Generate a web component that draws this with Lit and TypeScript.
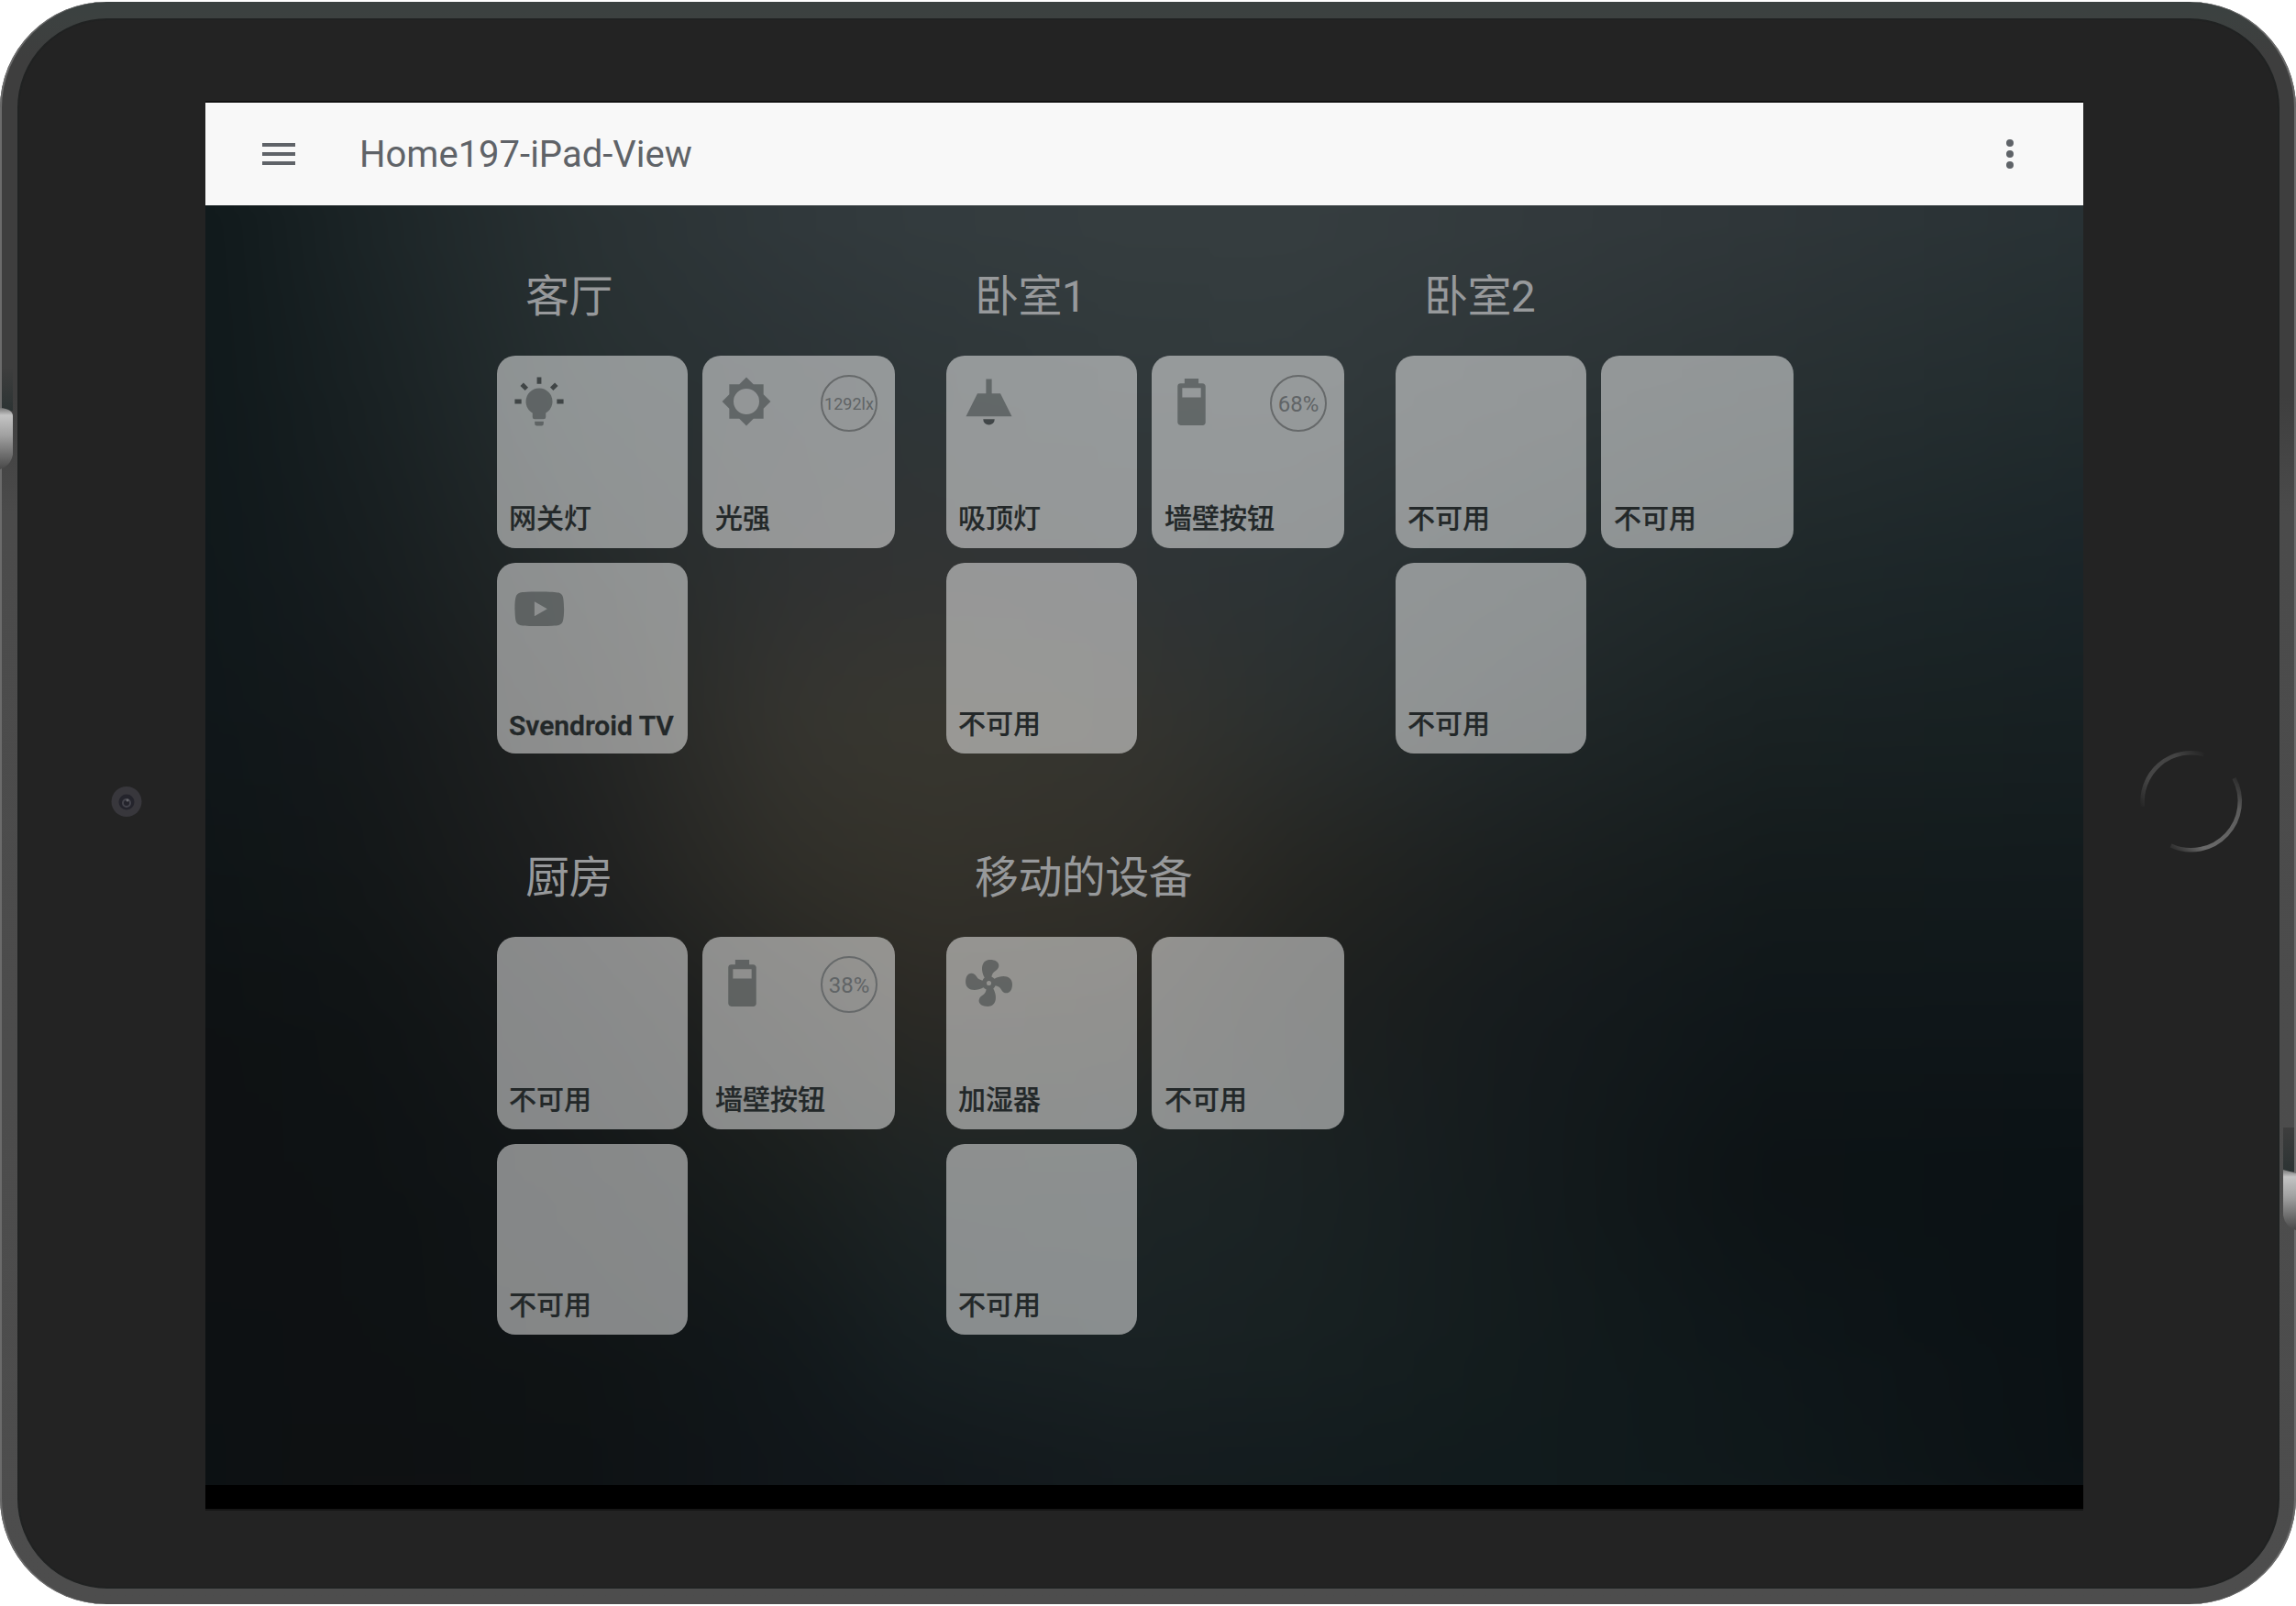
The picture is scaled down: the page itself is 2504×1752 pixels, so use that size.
import { LitElement, html, svg, css, nothing } from "lit";
import { customElement, property } from "lit/decorators.js";

interface Icon { size: number; cx: number; paths: string[]; dark?: string; }

const ICONS: Record<string, Icon> = {
  bulb: {
    size: 58, cx: 46,
    paths: ["M12,6A6,6 0 0,1 18,12C18,14.22 16.79,16.16 15,17.2V19A1,1 0 0,1 14,20H10A1,1 0 0,1 9,19V17.2C7.21,16.16 6,14.22 6,12A6,6 0 0,1 12,6M14,21V22A1,1 0 0,1 13,23H11A1,1 0 0,1 10,22V21H14"],
    dark: "M20,11H23V13H20V11M1,11H4V13H1V11M13,1V4H11V1H13M4.92,3.5L7.05,5.64L5.63,7.05L3.5,4.93L4.92,3.5M16.95,5.63L19.07,3.5L20.5,4.93L18.37,7.05L16.95,5.63Z",
  },
  sun: {
    size: 56, cx: 48,
    paths: ["M12,18A6,6 0 0,1 6,12A6,6 0 0,1 12,6A6,6 0 0,1 18,12A6,6 0 0,1 12,18M20,15.31L23.31,12L20,8.69V4H15.31L12,0.69L8.69,4H4V8.69L0.69,12L4,15.31V20H8.69L12,23.31L15.31,20H20V15.31Z"],
  },
  lamp: {
    size: 75, cx: 46,
    paths: ["M8,9H11V4H13V9H16L20,17H4L8,9Z"],
    dark: "M14,18A2,2 0 0,1 12,20A2,2 0 0,1 10,18H14Z",
  },
  battery: {
    size: 61, cx: 43.4,
    paths: ["M16,10H8V6H16M16.67,4H15V2H9V4H7.33A1.33,1.33 0 0,0 6,5.33V20.67C6,21.4 6.6,22 7.33,22H16.67A1.33,1.33 0 0,0 18,20.67V5.33C18,4.6 17.4,4 16.67,4Z"],
  },
  youtube: {
    size: 64.5, cx: 46,
    paths: ["M10,15L15.19,12L10,9V15M21.56,7.17C21.69,7.64 21.78,8.27 21.84,9.07C21.91,9.87 21.94,10.56 21.94,11.16L22,12C22,14.19 21.84,15.8 21.56,16.83C21.31,17.73 20.73,18.31 19.83,18.56C19.36,18.69 18.5,18.78 17.18,18.84C15.88,18.91 14.69,18.94 13.59,18.94L12,19C7.81,19 5.2,18.84 4.17,18.56C3.27,18.31 2.69,17.73 2.44,16.83C2.31,16.36 2.22,15.73 2.16,14.93C2.09,14.13 2.06,13.44 2.06,12.84L2,12C2,9.81 2.16,8.2 2.44,7.17C2.69,6.27 3.27,5.69 4.17,5.44C4.64,5.31 5.5,5.22 6.82,5.16C8.12,5.09 9.31,5.06 10.41,5.06L12,5C16.19,5 18.8,5.16 19.83,5.44C20.73,5.69 21.31,6.27 21.56,7.17Z"],
  },
  fan: {
    size: 61, cx: 46,
    paths: ["M12,11A1,1 0 0,0 11,12A1,1 0 0,0 12,13A1,1 0 0,0 13,12A1,1 0 0,0 12,11M12.5,2C17,2 17.11,5.57 14.75,6.75C13.76,7.24 13.32,8.29 13.13,9.22C13.61,9.42 14.03,9.73 14.35,10.13C18.05,8.13 22.03,8.92 22.03,12.5C22.03,17 18.46,17.1 17.28,14.73C16.78,13.74 15.72,13.3 14.79,13.11C14.59,13.59 14.28,14 13.88,14.34C15.87,18.03 15.08,22 11.5,22C7,22 6.91,18.42 9.27,17.24C10.25,16.75 10.69,15.71 10.89,14.79C10.4,14.59 9.97,14.27 9.65,13.87C5.96,15.85 2,15.07 2,11.5C2,7 5.56,6.89 6.74,9.26C7.24,10.25 8.29,10.68 9.22,10.87C9.41,10.39 9.73,9.97 10.14,9.65C8.15,5.96 8.94,2 12.5,2Z"],
  },
};

interface Tile { name: string; icon?: string; badge?: string; }
interface Room { title: string; tiles: Tile[]; }

const OFF: Tile = { name: "不可用" };
const ROOMS: Room[] = [
  { title: "客厅", tiles: [{ name: "网关灯", icon: "bulb" }, { name: "光强", icon: "sun", badge: "1292lx" }, { name: "Svendroid TV", icon: "youtube" }] },
  { title: "卧室1", tiles: [{ name: "吸顶灯", icon: "lamp" }, { name: "墙壁按钮", icon: "battery", badge: "68%" }, OFF] },
  { title: "卧室2", tiles: [OFF, OFF, OFF] },
  { title: "厨房", tiles: [OFF, { name: "墙壁按钮", icon: "battery", badge: "38%" }, OFF] },
  { title: "移动的设备", tiles: [{ name: "加湿器", icon: "fan" }, OFF, OFF] },
];

// Wallpaper: horizontal colour ramps, blended downwards from one row to the next.
const WALL_X = [0, 170, 410, 640, 780, 1010, 1180, 1400, 1700, 2048];
const WALL: { y: number; c: string[] }[] = [
  { y: 0, c: ["#10191b", "#1c2527", "#2a3234", "#31393c", "#343c3f", "#363e40", "#363e40", "#343b3e", "#30373a", "#293235"] },
  { y: 200, c: ["#10191b", "#192123", "#273031", "#2c3336", "#2e3638", "#31393b", "#323a3c", "#2e3638", "#293133", "#222c2e"] },
  { y: 410, c: ["#10181b", "#171d1f", "#242929", "#303232", "#333434", "#303436", "#2c3335", "#272e30", "#1f2829", "#1a2428"] },
  { y: 560, c: ["#10171a", "#15191b", "#222423", "#363530", "#393830", "#353530", "#2c302f", "#22292a", "#1a2223", "#172022"] },
  { y: 730, c: ["#0f1517", "#131718", "#1f2020", "#302f29", "#34322b", "#32302a", "#262622", "#1c2020", "#141b1c", "#131b1d"] },
  { y: 870, c: ["#0e1214", "#101415", "#181b1c", "#252522", "#2d2b26", "#2a2925", "#1f211f", "#171c1e", "#10171a", "#10171a"] },
  { y: 1060, c: ["#0e1113", "#0e1214", "#131718", "#1a1f1e", "#1f2525", "#1e2627", "#1b2324", "#151c1e", "#0d1315", "#0b1215"] },
  { y: 1250, c: ["#0e1113", "#0e1214", "#101415", "#12181b", "#172022", "#1a2224", "#182122", "#141d1e", "#0f171a", "#0b1114"] },
  { y: 1400, c: ["#0c1113", "#0f1112", "#0e1214", "#11161a", "#12171b", "#141b1e", "#131b1e", "#111b1d", "#10191b", "#0c1215"] },
];

@customElement("room-tile")
class RoomTile extends LitElement {
  @property({ attribute: false }) tile: Tile = OFF;
  static styles = css`
    :host { display: flex; flex-direction: column; justify-content: space-between; box-sizing: border-box;
      border-radius: 20px; background: rgba(255, 255, 255, 0.49); overflow: hidden; }
    .top { display: flex; justify-content: space-between; align-items: flex-start; }
    .slot { display: flex; justify-content: center; align-items: center; height: 100px; }
    .icon { display: block; flex: none; }
    .light { fill: rgba(44, 50, 51, 0.48); fill-rule: evenodd; }
    .dark { fill: rgba(36, 42, 43, 0.74); }
    .badge { box-sizing: border-box; width: 62px; height: 62px; margin: 21px 19px 0 0; border: 2px solid #66696a;
      border-radius: 50%; display: flex; align-items: center; justify-content: center; color: #606466;
      font-size: 24px; line-height: 28px; padding-top: 1px; }
    .small { font-size: 18px; }
    .name { padding: 0 0 14px 13px; font-size: 30px; line-height: 36px; font-weight: 500; color: #232829; white-space: nowrap;
      -webkit-text-stroke: 0.2px #232829; }
    :host(:nth-child(2)) .name { padding-left: 14px; }
    .latin { font-weight: 600; padding-bottom: 12px; -webkit-text-stroke: 0.3px #232829; }
  `;
  render() {
    const t = this.tile;
    const i = t.icon ? ICONS[t.icon] : undefined;
    return html`
      <div class="top">
        ${i ? html`<div class="slot" style="width:${i.cx * 2}px">
          <svg class="icon" width=${i.size} height=${i.size} viewBox="0 0 24 24">
            ${i.paths.map((d) => svg`<path class="light" d=${d}></path>`)}
            ${i.dark ? svg`<path class="dark" d=${i.dark}></path>` : nothing}
          </svg></div>` : html`<div class="slot"></div>`}
        ${t.badge ? html`<div class="badge ${t.badge.length > 4 ? "small" : ""}">${t.badge}</div>` : nothing}
      </div>
      <div class="name ${/^[A-Z]/.test(t.name) ? "latin" : ""}">${t.name}</div>`;
  }
}

@customElement("wall-paper")
class WallPaper extends LitElement {
  static styles = css`
    :host { display: block; }
    .art { display: block; width: 2048px; height: 1396px; }
  `;
  render() {
    return html`<svg class="art" viewBox="0 0 2048 1396">
      <defs>
        <filter id="soft" color-interpolation-filters="sRGB" filterUnits="userSpaceOnUse" x="-200" y="-200" width="2448" height="1800"><feGaussianBlur stdDeviation="42"></feGaussianBlur></filter>
        ${WALL.map((r, k) => {
          const next = WALL[k + 1]?.y ?? 1700;
          return svg`
            <linearGradient id="h${k}" gradientUnits="userSpaceOnUse" x1="0" y1="0" x2="2048" y2="0">
              ${r.c.map((c, j) => svg`<stop offset=${WALL_X[j] / 2048} stop-color=${c}></stop>`)}
            </linearGradient>
            <linearGradient id="v${k}" gradientUnits="userSpaceOnUse" x1="0" y1=${r.y} x2="0" y2=${next}>
              <stop offset="0" stop-color="#fff"></stop><stop offset="1" stop-color="#fff" stop-opacity="0"></stop>
            </linearGradient>
            <mask id="m${k}" maskUnits="userSpaceOnUse" x="-200" y="-200" width="2448" height="1900">
              <rect x="-200" y="-200" width="2448" height="1900" fill="url(#v${k})"></rect>
            </mask>`;
        })}
      </defs>
      <g filter="url(#soft)">
        ${WALL.map((_, k) => k).reverse().map((k) => svg`<rect x="-200" y="-200" width="2448" height="1900"
          fill="url(#h${k})" mask=${k === WALL.length - 1 ? "none" : `url(#m${k})`}></rect>`)}
      </g>
    </svg>`;
  }
}

@customElement("app-root")
class AppRoot extends LitElement {
  static styles = css`
    :host { display: block; width: 2504px; height: 1752px; background: #fff; overflow: hidden; position: relative;
      font-family: Roboto, "Noto Sans CJK SC", sans-serif; }
    .device { box-sizing: border-box; width: 2504px; height: 1752px; padding: 2px 0; }
    .shell { box-sizing: border-box; height: 1748px; border-radius: 116px; padding: 18px 18px 17px 19px;
      background: linear-gradient(#3a4140 0, #3c4140 18px, #3e3e3e 60px, #3e3e3e 430px, #4b4b4b 560px, #4d4d4d 100%);
      box-shadow: inset 2px 0 0 #6b6b6b, inset -2px 0 0 #6b6b6b; }
    .bezel { box-sizing: border-box; height: 100%; border-radius: 98px; background: #232323; padding: 90px 0 0 203px;
      border: 2px solid #202222; }
    .screen { width: 2048px; height: 1534px; box-shadow: 0 -2px 0 #111, 0 2px 0 #161616; background: #000; display: flex; flex-direction: column; }
    .bar { box-sizing: border-box; height: 112px; background: #f8f8f8; display: flex; align-items: center; padding: 0 56px; flex: none; }
    .bar-icon { display: block; width: 48px; height: 48px; fill: #5f6368; }
    .heading { flex: 1; margin-left: 64px; padding-top: 2px; font-size: 40px; line-height: 48px; color: #5f6368; }
    .view { flex: none; display: grid; height: 1396px; overflow: hidden; }
    .wall, .rooms { grid-area: 1 / 1; }
    .rooms { box-sizing: border-box; z-index: 1; padding: 56px 0 0 318px; display: grid; grid-template-columns: repeat(3, 434px);
      column-gap: 56px; row-gap: 92px; align-content: start; }
    .title { height: 108px; box-sizing: border-box; padding: 14px 0 0 31px; font-size: 48px; line-height: 60px; color: #97999b;
      letter-spacing: -0.012em; }
    .tiles { display: grid; grid-template-columns: 208px 210px; grid-template-rows: 210px 208px; gap: 16px; }
    .extras { position: absolute; left: 0; top: 0; display: block; }
  `;
  render() {
    return html`
      <div class="device"><div class="shell"><div class="bezel"><div class="screen">
        <header class="bar">
          <svg class="bar-icon" viewBox="0 0 24 24"><path d="M3,6H21V8H3V6M3,11H21V13H3V11M3,16H21V18H3V16Z"></path></svg>
          <div class="heading">Home197-iPad-View</div>
          <svg class="bar-icon" viewBox="0 0 24 24"><path d="M12,16A2,2 0 0,1 14,18A2,2 0 0,1 12,20A2,2 0 0,1 10,18A2,2 0 0,1 12,16M12,10A2,2 0 0,1 14,12A2,2 0 0,1 12,14A2,2 0 0,1 10,12A2,2 0 0,1 12,10M12,4A2,2 0 0,1 14,6A2,2 0 0,1 12,8A2,2 0 0,1 10,6A2,2 0 0,1 12,4Z"></path></svg>
        </header>
        <main class="view">
          <wall-paper class="wall"></wall-paper>
          <div class="rooms">
            ${ROOMS.map((r) => html`<section>
              <div class="title">${r.title}</div>
              <div class="tiles">${r.tiles.map((t) => html`<room-tile .tile=${t}></room-tile>`)}</div>
            </section>`)}
          </div>
        </main>
      </div></div></div></div>
      <svg class="extras" width="2504" height="1752" viewBox="0 0 2504 1752">
        <defs>
          <linearGradient id="btn" x1="0" y1="0" x2="0" y2="1">
            <stop offset="0" stop-color="#777"></stop><stop offset=".12" stop-color="#c4c4c4"></stop>
            <stop offset=".45" stop-color="#a0a0a0"></stop><stop offset="1" stop-color="#484848"></stop>
          </linearGradient>
          <linearGradient id="shade" x1="0" y1="0" x2="0" y2="1">
            <stop offset="0" stop-color="#3e3e3e"></stop><stop offset="1" stop-color="#2c3333"></stop>
          </linearGradient>
          <linearGradient id="arcA" gradientUnits="userSpaceOnUse" x1="2334" y1="880" x2="2406" y2="822">
            <stop offset="0" stop-color="#505050" stop-opacity="0"></stop><stop offset=".3" stop-color="#464646"></stop>
            <stop offset=".7" stop-color="#444"></stop><stop offset="1" stop-color="#444" stop-opacity="0"></stop>
          </linearGradient>
          <linearGradient id="arcB" gradientUnits="userSpaceOnUse" x1="2440" y1="842" x2="2362" y2="926">
            <stop offset="0" stop-color="#555" stop-opacity="0"></stop><stop offset=".25" stop-color="#5c5c5c"></stop>
            <stop offset=".75" stop-color="#6a6a6a"></stop><stop offset="1" stop-color="#666" stop-opacity="0"></stop>
          </linearGradient>
        </defs>
        <rect x="2" y="400" width="12" height="48" fill="url(#shade)"></rect>
        <rect x="2490" y="1230" width="12" height="48" fill="url(#shade)"></rect>
        <path d="M0 445Q14 446 14 454V496Q12 508 0 512Z" fill="url(#btn)"></path>
        <path d="M2504 1280L2490 1276V1326Q2492 1338 2504 1342Z" fill="url(#btn)"></path>
        <path d="M2336.800 880A53.200 53.200 0 0 1 2403.500 823" fill="none" stroke="url(#arcA)" stroke-width="4.500"></path>
        <path d="M2436.500 849A53.200 53.200 0 0 1 2367.500 922.500" fill="none" stroke="url(#arcB)" stroke-width="4.500"></path>
        <circle cx="138" cy="874.500" r="16.500" fill="#38373c"></circle>
        <circle cx="138" cy="875" r="8.500" fill="#24242c"></circle>
        <circle cx="138" cy="876" r="4" fill="none" stroke="#44444c" stroke-width="2"></circle>
        <circle cx="139" cy="873" r="1.500" fill="#66666c"></circle>
      </svg>`;
  }
}
